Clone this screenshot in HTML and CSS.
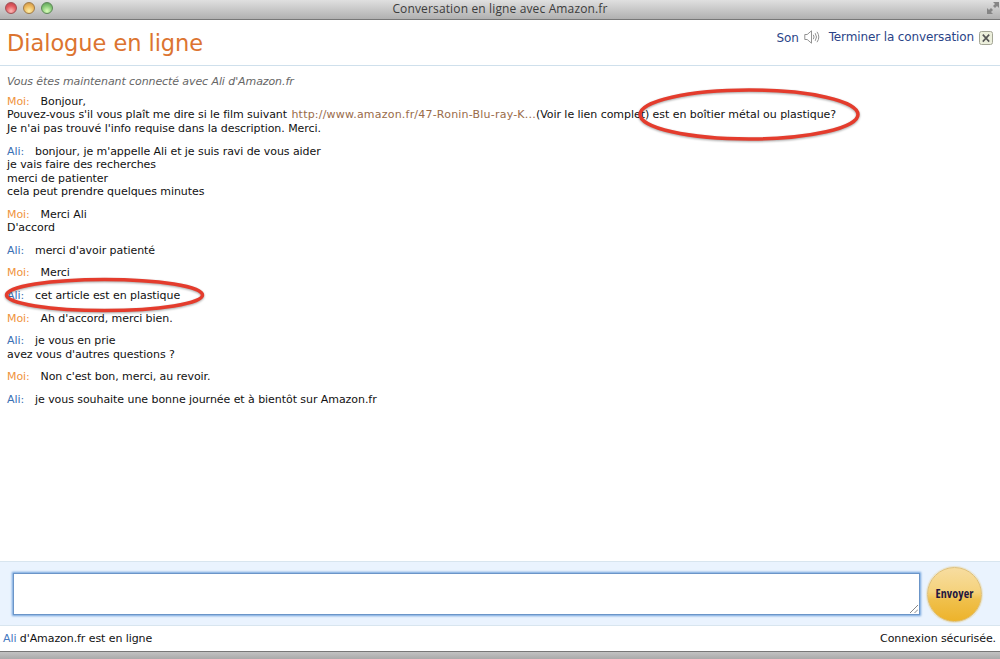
FILE: index.html
```html
<!DOCTYPE html>
<html lang="fr">
<head>
    <meta charset="UTF-8">
    <meta name="viewport" content="width=device-width, initial-scale=1.0">
    <title>Conversation en ligne avec Amazon.fr</title>
    <link rel="stylesheet" href="styles.css">
</head>
<body>
    <div class="titlebar">
        <div class="lights">
            <span class="light red"></span>
            <span class="light yellow"></span>
            <span class="light green"></span>
        </div>
        <div class="window-title">Conversation en ligne avec Amazon.fr</div>
        <svg class="expand" width="14" height="14" viewBox="0 0 14 14">
            <path d="M7 1h6v6l-2-2-2 2-2-2 2-2zM1 7l2 2 2-2 2 2-2 2 2 2H1z" fill="#858585"/>
        </svg>
    </div>

    <div class="header">
        <h1>Dialogue en ligne</h1>
        <div class="actions">
            <a class="sound">Son</a>
            <svg class="speaker" width="16" height="14" viewBox="0 0 16 14" fill="none" stroke="#929292">
                <path d="M.8 4.500h2.400L7.500 .8v12.400L3.200 9.500H.8z"/>
                <path d="M9.300 4.800q1.500 2.200 0 4.400M11.200 3.200q2.600 3.800 0 7.600M13 1.800q3.600 5.200 0 10.400"/>
            </svg>
            <a class="end">Terminer la conversation</a>
            <svg class="close" width="14" height="14" viewBox="0 0 14 14">
                <rect x=".5" y=".5" width="13" height="13" rx="2" fill="#ecefdc" stroke="#a4a696"/>
                <path d="M3.800 3.600l6.400 7M10.200 3.600l-6.400 7" stroke="#555" stroke-width="1.600"/>
            </svg>
        </div>
    </div>

    <div class="chat">
        <p class="status">Vous êtes maintenant connecté avec Ali d'Amazon.fr</p>
        <p><span class="me">Moi:</span>Bonjour,<br>
            Pouvez-vous s'il vous plaît me dire si le film suivant <a class="link">http://www.amazon.fr/47-Ronin-Blu-ray-K...</a><span class="question">(Voir le lien complet) est en boîtier métal ou plastique?</span><br>
            Je n'ai pas trouvé l'info requise dans la description. Merci.</p>
        <p><span class="ali">Ali:</span>bonjour, je m'appelle Ali et je suis ravi de vous aider<br>
            je vais faire des recherches<br>
            merci de patienter<br>
            cela peut prendre quelques minutes</p>
        <p><span class="me">Moi:</span>Merci Ali<br>D'accord</p>
        <p><span class="ali">Ali:</span>merci d'avoir patienté</p>
        <p><span class="me">Moi:</span>Merci</p>
        <p><span class="ali">Ali:</span>cet article est en plastique</p>
        <p><span class="me">Moi:</span>Ah d'accord, merci bien.</p>
        <p><span class="ali">Ali:</span>je vous en prie<br>avez vous d'autres questions ?</p>
        <p><span class="me">Moi:</span>Non c'est bon, merci, au revoir.</p>
        <p><span class="ali">Ali:</span>je vous souhaite une bonne journée et à bientôt sur Amazon.fr</p>
    </div>

    <div class="compose">
        <div class="input">
            <svg class="grip" width="8" height="8" viewBox="0 0 8 8" stroke="#888">
                <path d="M0 8L8 0M4.500 8L8 4.500"/>
            </svg>
        </div>
        <button type="button" class="send">Envoyer</button>
    </div>

    <div class="footer">
        <div><span class="name">Ali</span> d'Amazon.fr est en ligne</div>
        <div class="secure">Connexion sécurisée.</div>
    </div>
    <div class="window-edge"></div>

    <!-- hand drawn highlights over the conversation -->
    <svg class="marks" width="1000" height="659" viewBox="0 0 1000 659">
        <ellipse cx="749" cy="114.500" rx="109" ry="24.500"/>
        <ellipse cx="104.500" cy="295" rx="98" ry="15.500"/>
    </svg>
</body>
</html>
```
FILE: styles.css
```css
* {
    box-sizing: border-box;
}
body {
    margin: 0;
    width: 1000px;
    height: 659px;
    display: flex;
    flex-direction: column;
    overflow: hidden;
    background: white;
    font-family: "DejaVu Sans", Verdana, sans-serif;
    font-size: 11px;
    letter-spacing: -0.06px;
    color: #111;
}
svg {
    display: block;
    flex: none;
}
.titlebar {
    height: 20px;
    display: grid;
    grid-template-columns: 100px 1fr 100px;
    background: linear-gradient(#e0e0e0, #b0b0b0);
    border-bottom: 1px solid #777;
}
.lights {
    display: flex;
    gap: 6px;
    padding: 2px 0 0 5px;
}
.light {
    width: 12px;
    height: 12px;
    border-radius: 50%;
    border: 1px solid #777;
}
.red {
    background: radial-gradient(circle at 50% 80%, #ffbcb8, #e25a5f 55%, #b8404a);
    border-color: #a05055;
}
.yellow {
    background: radial-gradient(circle at 50% 80%, #fff0a8, #ecb85c 55%, #c48b40);
    border-color: #a07b46;
}
.green {
    background: radial-gradient(circle at 50% 80%, #dcffbc, #86c976 55%, #559450);
    border-color: #5d8858;
}
.window-title {
    text-align: center;
    font-family: "Open Sans", "Noto Sans", sans-serif;
    font-size: 12px;
    letter-spacing: 0.14px;
    line-height: 17px;
    color: #3c3c3c;
    white-space: nowrap;
}
.expand {
    justify-self: end;
    margin-top: 1px;
}
.header {
    height: 46px;
    display: flex;
    justify-content: space-between;
    padding: 0 7px;
    border-bottom: 1px solid #cfe0ec;
}
h1 {
    margin: 0;
    font-size: 22.5px;
    font-weight: normal;
    line-height: 47px;
    color: #dc7430;
    white-space: nowrap;
}
.actions {
    display: flex;
    color: #2b4488;
    font-size: 12px;
    letter-spacing: -0.12px;
    line-height: 14px;
    padding-top: 10px;
    white-space: nowrap;
}
.sound {
    padding-top: 1px;
}
.speaker {
    margin: 0 9px 0 5px;
}
.close {
    margin: 1px 0 0 5px;
}
.chat {
    flex: 1;
    padding: 9px 7px 0;
    line-height: 13.55px;
    white-space: nowrap;
}
.chat p {
    margin: 0 0 9px;
}
.chat .status {
    margin-bottom: 6.4px;
    letter-spacing: -0.09px;
    color: #666;
    font-style: italic;
}
.me, .ali {
    display: inline-block;
}
.me {
    width: 33.5px;
    color: #f0943c;
}
.ali {
    width: 28px;
    color: #3b70b4;
}
.link {
    margin-left: 1px;
    letter-spacing: 0.21px;
    color: #996b4a;
}
.question {
    letter-spacing: -0.05px;
}
.compose {
    height: 65px;
    display: flex;
    align-items: center;
    padding: 1px 18px 0 13px;
    gap: 7px;
    background: #eaf3fe;
    border-top: 1px solid #d8e5ef;
    border-bottom: 1px solid #d8e5ef;
}
.input {
    flex: 1;
    height: 42px;
    display: flex;
    justify-content: flex-end;
    align-items: flex-end;
    padding: 1px;
    background: white;
    border: 1px solid #6b95c8;
    box-shadow: 0 0 2px 1px #71a3dc;
}
.send {
    width: 55px;
    height: 55px;
    padding: 0 0 2px;
    border: 1px solid #dfc078;
    border-radius: 50%;
    background: linear-gradient(#f7dda0, #f5d27c 45%, #f0c04c 60%, #edb32b);
    box-shadow: 0 0 1px 1px #e9e2c8;
    font-family: "Open Sans", "Noto Sans", sans-serif;
    font-stretch: condensed;
    font-size: 12px;
    font-weight: bold;
    letter-spacing: 0.1px;
    color: #23173e;
}
.footer {
    height: 25px;
    display: flex;
    justify-content: space-between;
    padding: 0 4px 0 3px;
    letter-spacing: -0.08px;
    line-height: 26px;
    white-space: nowrap;
}
.name {
    color: #4679c0;
}
.window-edge {
    height: 8px;
    background: linear-gradient(#c2c2c2, #aaa);
    border-top: 1px solid #777;
}
.marks {
    position: absolute;
    top: 0;
    left: 0;
    fill: none;
    stroke: #e43c2d;
    stroke-width: 3.5px;
    filter: drop-shadow(0 1px 1px rgba(0, 0, 0, 0.35));
    pointer-events: none;
}
```
